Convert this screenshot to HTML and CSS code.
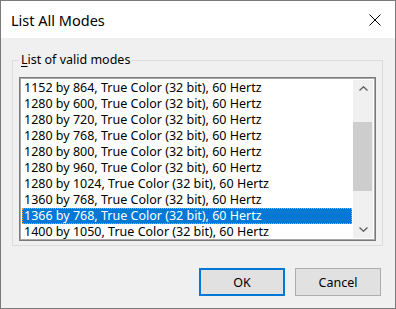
FILE: index.html
```html
<!DOCTYPE html>
<html lang="en">
<head>
    <meta charset="UTF-8">
    <title>List All Modes</title>
    <link rel="stylesheet" href="styles.css">
</head>
<body>
    <div class="dialog">
        <div class="titlebar">
            <span class="title">List All Modes</span>
            <svg class="close" width="12" height="12" viewBox="0 0 12 12">
                <path d="M0.5 0.5 L11.5 11.5 M11.5 0.5 L0.5 11.5" stroke="#000" stroke-width="1" fill="none"/>
            </svg>
        </div>

        <div class="content">
            <fieldset class="group">
                <legend><u>L</u>ist of valid modes</legend>
                <div class="listbox">
                    <div class="rows">
                        <div class="row">1152 by 864, True Color (32 bit), 60 Hertz</div>
                        <div class="row">1280 by 600, True Color (32 bit), 60 Hertz</div>
                        <div class="row">1280 by 720, True Color (32 bit), 60 Hertz</div>
                        <div class="row">1280 by 768, True Color (32 bit), 60 Hertz</div>
                        <div class="row">1280 by 800, True Color (32 bit), 60 Hertz</div>
                        <div class="row">1280 by 960, True Color (32 bit), 60 Hertz</div>
                        <div class="row">1280 by 1024, True Color (32 bit), 60 Hertz</div>
                        <div class="row">1360 by 768, True Color (32 bit), 60 Hertz</div>
                        <div class="row selected">1366 by 768, True Color (32 bit), 60 Hertz</div>
                        <div class="row">1400 by 1050, True Color (32 bit), 60 Hertz</div>
                    </div>
                    <div class="scrollbar">
                        <div class="arrow">
                            <svg width="9" height="5" viewBox="0 0 9 5"><path d="M0.5 4.5 L4.5 0.8 L8.5 4.5" stroke="#606060" stroke-width="1.4" fill="none"/></svg>
                        </div>
                        <div class="track">
                            <div class="thumb"></div>
                        </div>
                        <div class="arrow">
                            <svg width="9" height="5" viewBox="0 0 9 5"><path d="M0.5 0.5 L4.5 4.2 L8.5 0.5" stroke="#606060" stroke-width="1.4" fill="none"/></svg>
                        </div>
                    </div>
                </div>
            </fieldset>

            <div class="buttons">
                <button class="btn default">OK</button>
                <button class="btn">Cancel</button>
            </div>
        </div>
    </div>
</body>
</html>
```

FILE: styles.css
```css
* {
    margin: 0;
    padding: 0;
    box-sizing: border-box;
}

body {
    font-family: 'Noto Sans', 'Open Sans', sans-serif;
    font-size: 12.5px;
    color: #000;
    background: #fff;
}

.dialog {
    width: 396px;
    height: 309px;
    border: 1px solid #7a7a7a;
    background: #f0f0f0;
    display: flex;
    flex-direction: column;
}

.titlebar {
    height: 37px;
    background: #fff;
    display: flex;
    align-items: center;
    justify-content: space-between;
    padding: 0 14px 0 10px;
}

.title {
    font-size: 14.5px;
    margin-top: 1px;
}

.close {
    display: block;
}

.content {
    flex: 1;
    padding: 14px 12px 0 11px;
    display: flex;
    flex-direction: column;
}

.group {
    border: 1px solid #dcdcdc;
    padding: 9px 6px 4px 6px;
}

.group legend {
    padding: 0 2px;
    line-height: 16px;
}

.group legend u {
    text-decoration-thickness: 1px;
    text-underline-offset: 2px;
}

.listbox {
    height: 164px;
    border: 1px solid #7a7a7a;
    box-shadow: inset 0 0 0 1px #a8a8a8;
    background: #fff;
    padding: 2px;
    display: flex;
}

.rows {
    flex: 1;
}

.row {
    height: 16px;
    line-height: 16px;
    padding-left: 2px;
    white-space: nowrap;
    overflow: hidden;
}

.row.selected {
    background: #0078d7;
    color: #fff;
    outline: 1px dotted #f0a030;
    outline-offset: -1px;
}

.scrollbar {
    width: 20px;
    margin-left: 1px;
    background: #f0f0f0;
    display: flex;
    flex-direction: column;
}

.arrow {
    height: 17px;
    display: flex;
    align-items: center;
    justify-content: center;
}

.arrow svg {
    display: block;
}

.track {
    flex: 1;
}

.thumb {
    margin-top: 25px;
    height: 69px;
    margin-right: 1px;
    background: #cdcdcd;
}

.buttons {
    display: flex;
    justify-content: flex-end;
    gap: 10px;
    margin-top: 22px;
    padding-right: 2px;
}

.btn {
    width: 86px;
    height: 28px;
    font-family: inherit;
    font-size: 12.5px;
    color: #000;
    background: #e1e1e1;
    border: 1px solid #adadad;
}

.btn.default {
    border: 2px solid #0078d7;
}
```
